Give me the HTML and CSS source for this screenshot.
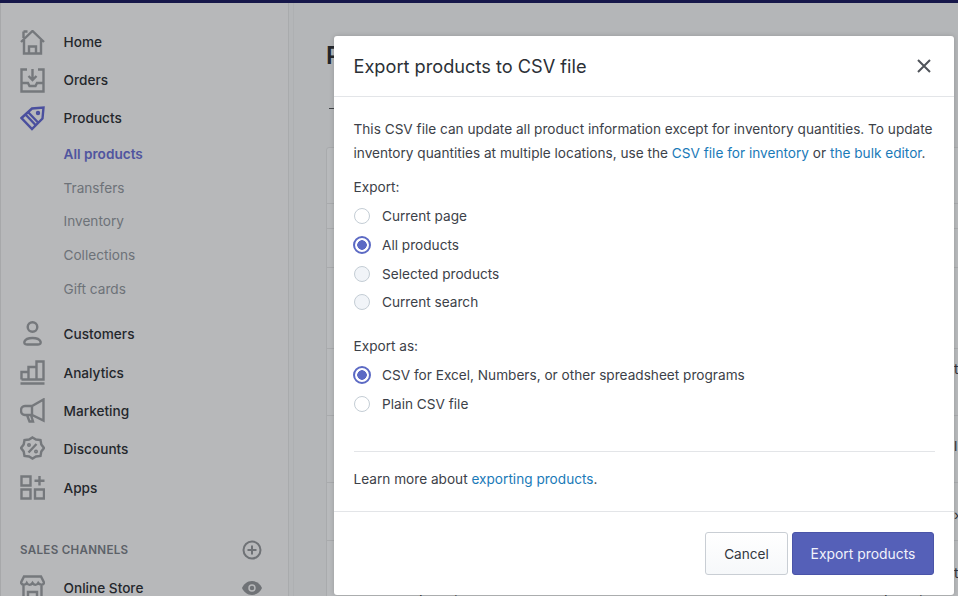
FILE: index.html
```html
<!DOCTYPE html>
<html lang="en">
<head>
<meta charset="utf-8">
<title>Export products</title>
<link rel="stylesheet" href="styles.css">
</head>
<body>
<div class="topbar"></div>
<div class="app">
  <nav class="sidebar">
    <a class="item"><svg class="ico" viewBox="0 0 25 25"><path d="M1 12 12.500 1 24 12M3.500 1.500h4M3.500 1.500V8M4 10v13.500h17V10M9 23.500v-7h7v7"/></svg><span>Home</span></a>
    <a class="item"><svg class="ico" viewBox="0 0 25 25"><path d="M7 1.500H1.500v22h22v-22H18M1.500 15h6.500l1.500 3h6l1.500-3h6.500M12.500 1v10.500M8.500 8l4 4 4-4"/></svg><span>Orders</span></a>
    <a class="item item-active"><svg class="ico" viewBox="0 0 25 25"><path d="M1.500 12 12 2.500l11.500-1-1 11L12 23zM5.500 8.500l10.500 11M8 6l10.500 11"/><circle cx="18" cy="7" r="1"/></svg><span>Products</span></a>
    <div class="subnav">
      <a class="sub sub-active">All products</a>
      <a class="sub">Transfers</a>
      <a class="sub">Inventory</a>
      <a class="sub">Collections</a>
      <a class="sub">Gift cards</a>
    </div>
    <a class="item"><svg class="ico" viewBox="0 0 25 25"><circle cx="12.500" cy="6" r="4.800"/><path d="M7 23.500c-2.500 0-3-1.500-2.500-3 1-2.500 4-3.500 8-3.500s7 1 8 3.500c.5 1.500 0 3-2.500 3z"/></svg><span>Customers</span></a>
    <a class="item item-gap"><svg class="ico" viewBox="0 0 25 25"><path d="M1.500 19.500v-7.500h7v7.500M8.500 19.500V7h8v12.500M16.500 19.500V1.500h7v18zM1.500 19.500h22M.5 23.500h24"/></svg><span>Analytics</span></a>
    <a class="item"><svg class="ico" viewBox="0 0 25 25"><path d="M23.500 1.500v21L12 17H5C2.500 17 1 15 1 12.500S2.500 8 5 8h7zM12 8v9M7 17l2.500 6.500h3.500L11 17"/></svg><span>Marketing</span></a>
    <a class="item"><svg class="ico" viewBox="0 0 25 25"><path d="M12.500 1.500 16 3.500l4.500.5.800 4.500 2.700 3.500-2.700 3.500-.8 4.500-4.500.5-3.500 2-3.500-2-4.500-.5-.8-4.500L1 12l2.700-3.500.8-4.500L9 3.500zM8.500 16.500l8-8.500"/><circle cx="9" cy="9" r=".8"/><circle cx="16" cy="15.500" r=".8"/></svg><span>Discounts</span></a>
    <a class="item item-gap"><svg class="ico" viewBox="0 0 25 25"><path d="M1.500 1.500h9v9h-9zM1.500 14.500h9v9h-9zM15 14.500h9v9h-9zM19.500 1v9.500M14.500 5.700h10"/></svg><span>Apps</span></a>
    <div class="channels">
      <span class="channels-title">SALES CHANNELS</span>
      <svg class="side-ico" viewBox="0 0 20 20"><circle cx="10" cy="10" r="8.500"/><path d="M10 5.500v9M5.500 10h9"/></svg>
    </div>
    <a class="item store"><svg class="ico" viewBox="0 0 25 25"><path d="M4 1.500h17l3 6c0 2.500-4 3-5.800.5-1.500 2.500-4 2.500-5.700 0-1.700 2.500-4.200 2.500-5.700 0C5.500 10.500 1.500 10 1 7.500zM3.500 10v13h18V10M8 23v-6h9v6"/></svg><span>Online Store</span><svg class="eye" viewBox="0 0 20 14"><path d="M10 0C5 0 1.500 3.500 0 7c1.500 3.500 5 7 10 7s8.500-3.500 10-7c-1.500-3.500-5-7-10-7z"/><circle class="eye-in" cx="10" cy="7" r="3"/></svg></a>
  </nav>
  <main class="main">
    <div class="page-inner">
      <h1 class="page-title">Products</h1>
      <div class="tabs"><span class="tab-mark"></span></div>
      <div class="card">
        <div class="row row-head"></div>
        <div class="row row-a"></div>
        <div class="row row-b"></div>
        <div class="row row-c"></div>
        <div class="row row-d"><span class="cell">t</span></div>
        <div class="row row-e"><span class="cell">l</span></div>
        <div class="row row-f"><span class="cell">›</span></div>
        <div class="row row-g"><span class="cell-low">Inventory</span><span class="cell-low cell-far">Inventory</span><span class="cell">t</span></div>
      </div>
    </div>
  </main>
</div>

<section class="modal">
  <header class="modal-head">
    <h2 class="modal-title">Export products to CSV file</h2>
    <svg class="close" viewBox="0 0 14 14"><path d="M1 1l12 12M13 1 1 13"/></svg>
  </header>
  <div class="modal-body">
    <p class="intro">This CSV file can update all product information except for inventory quantities. To update inventory quantities at multiple locations, use the <a class="link">CSV file for inventory</a> or <a class="link">the bulk editor</a>.</p>
    <div class="group-label">Export:</div>
    <div class="radios">
      <div class="radio"><span class="dot"></span>Current page</div>
      <div class="radio"><span class="dot dot-on"></span>All products</div>
      <div class="radio"><span class="dot dot-dim"></span>Selected products</div>
      <div class="radio"><span class="dot dot-dim"></span>Current search</div>
    </div>
    <div class="group-label group-two">Export as:</div>
    <div class="radios">
      <div class="radio"><span class="dot dot-on"></span>CSV for Excel, Numbers, or other spreadsheet programs</div>
      <div class="radio"><span class="dot"></span>Plain CSV file</div>
    </div>
    <p class="learn">Learn more about <a class="link">exporting products</a>.</p>
  </div>
  <footer class="modal-foot">
    <button class="btn">Cancel</button>
    <button class="btn btn-primary">Export products</button>
  </footer>
</section>
</body>
</html>
```
FILE: styles.css
```css
* { box-sizing: border-box; }
html, body { margin: 0; height: 100%; }
body {
  width: 958px;
  height: 596px;
  overflow: hidden;
  position: relative;
  background: #b4b6b8;
  font-family: Inter, "Liberation Sans", sans-serif;
  font-size: 13.64px;
  color: #3c4148;
}
.topbar { height: 3px; background: #16174a; }
.app { display: flex; height: 593px; }

.sidebar {
  width: 289px;
  flex: none;
  background: #b7b8ba;
  border-left: 1px solid #a7a8aa;
  border-right: 1px solid #a9abad;
  padding-top: 20px;
  display: flex;
  flex-direction: column;
  overflow: hidden;
}
.item {
  display: flex;
  align-items: center;
  height: 38px;
  flex: none;
  padding-left: 19px;
  color: #24272c;
  font-weight: 500;
}
.item span { margin-left: 18.5px; }
.ico {
  width: 25px;
  height: 25px;
  flex: none;
  fill: none;
  stroke: #75787c;
  stroke-width: 2.4;
}
.item-active .ico { stroke: #4a4f9e; }
.subnav { display: flex; flex-direction: column; flex: none; padding-bottom: 9px; }
.sub {
  height: 33.75px;
  flex: none;
  display: flex;
  align-items: center;
  padding-left: 62.5px;
  color: #6d7278;
  font-weight: 400;
}
.sub-active { color: #50559f; font-weight: 600; }
.item-gap { margin-top: 1px; }
.channels {
  display: flex;
  flex: none;
  align-items: center;
  justify-content: space-between;
  height: 24px;
  margin-top: 31px;
  padding: 0 26px 0 19px;
}
.channels-title {
  font-size: 11.600px;
  font-weight: 600;
  letter-spacing: .3px;
  color: #5c6168;
}
.side-ico { width: 20px; height: 20px; fill: none; stroke: #6f7276; stroke-width: 2; }
.store { margin-top: 7px; }
.store span { flex: 1; }
.eye { width: 20px; height: 14px; margin-right: 26px; fill: #6f7276; }
.eye-in { fill: #6f7276; stroke: #b7b8ba; stroke-width: 1.500; }

.main {
  flex: 1;
  min-width: 0;
  overflow: hidden;
  padding-left: 37px;
  padding-top: 37px;
  background: linear-gradient(to right, #b4b6b8 4px, #aeb0b2 4px, #aeb0b2 5px, #b4b6b8 5px);
}
.page-inner { width: 640px; }
.page-title { margin: 0; font-size: 24px; font-weight: 600; color: #23262b; line-height: 32px; }
.tabs { height: 38px; }
.tab-mark { display: block; width: 30px; height: 1px; margin-left: 3px; position: relative; top: 36px; background: #3f4246; }
.card {
  margin-top: 37px;
  background: #b8babc;
  border: 1px solid #a9abad;
  border-radius: 3px;
}
.row {
  border-bottom: 1px solid #a9abad;
  display: flex;
  padding-left: 627px;
  white-space: nowrap;
  color: #2c2f33;
  position: relative;
}
.row-head { height: 56px; }
.row-a { height: 25px; }
.row-b { height: 39px; }
.row-c { height: 81px; }
.row-d { height: 67px; padding-top: 12px; }
.row-e { height: 67px; padding-top: 22px; }
.row-f { height: 58px; padding-top: 24px; }
.row-g { height: 70px; padding-top: 24px; border-bottom: 0; }
.cell-low { position: absolute; left: 92px; top: 51px; }
.cell-far { left: 557px; }

.modal {
  position: absolute;
  left: 334px;
  top: 36px;
  width: 620px;
  height: 559px;
  background: #fff;
  border-radius: 3px;
  display: flex;
  flex-direction: column;
  box-shadow: 0 0 4px rgba(60, 60, 60, .25);
}
.modal-head {
  height: 61px;
  flex: none;
  display: flex;
  align-items: center;
  justify-content: space-between;
  padding: 0 23px 0 19.500px;
  border-bottom: 1px solid #e3e5e8;
}
.modal-title { margin: 0; font-size: 18.200px; font-weight: 400; color: #2b3036; }
.close { width: 14px; height: 14px; fill: none; stroke: #50545a; stroke-width: 2; }
.modal-body { flex: 1; padding: 20px 19.500px 0; display: flex; flex-direction: column; }
.intro { margin: 0; line-height: 24px; }
.link { color: #1a7ab8; }
.group-label { margin-top: 12px; line-height: 20px; }
.group-two { margin-top: 19px; }
.radios { display: flex; flex-direction: column; margin-top: 5px; }
.radio { display: flex; align-items: center; height: 28.670px; }
.dot {
  width: 16px;
  height: 16px;
  flex: none;
  margin-right: 12.500px;
  border: 1px solid #c4cdd5;
  border-radius: 50%;
  background: #fff;
}
.dot-dim { background: #f1f4f8; }
.dot-on {
  width: 18px;
  height: 18px;
  margin-left: -1px;
  margin-right: 11.500px;
  border: 2px solid #5c6ac4;
  background: radial-gradient(circle, #5c6ac4 0 4.500px, #fff 5px);
}
.learn {
  margin: 33px 0 0;
  border-top: 1px solid #e3e5e8;
  padding-top: 17px;
  line-height: 20px;
}
.modal-foot {
  height: 84px;
  flex: none;
  display: flex;
  justify-content: flex-end;
  gap: 4px;
  padding: 20px 20px 0;
  border-top: 1px solid #e3e5e8;
}
.btn {
  width: 83px;
  height: 43px;
  font: inherit;
  color: #33373d;
  background: linear-gradient(#fff, #f6f8fa);
  border: 1px solid #c9ced4;
  border-radius: 3px;
}
.btn-primary {
  width: 142px;
  font-size: 13.9px;
  color: #f1f2fb;
  background: #5560b8;
  border-color: #4a54a8;
}
```
